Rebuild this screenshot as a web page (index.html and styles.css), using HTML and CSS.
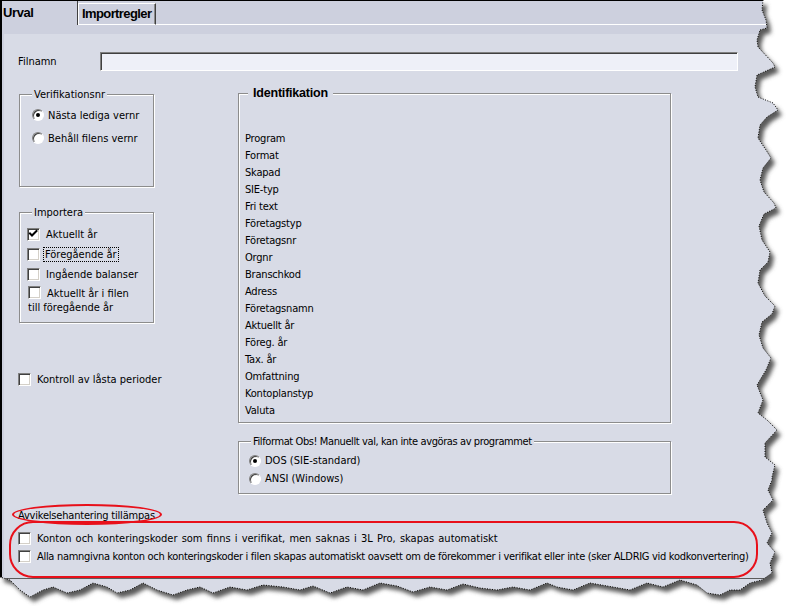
FILE: index.html
```html
<!DOCTYPE html>
<html lang="sv">
<head>
<meta charset="utf-8">
<title>Urval</title>
<link rel="stylesheet" href="styles.css">
</head>
<body>
<div class="sheet">
  <div class="window">
    <div class="tabs">
      <div class="tab tab-active">Urval</div>
      <div class="tab tab-idle">Importregler</div>
      <div class="tab-fill"></div>
    </div>
    <div class="page">
      <div class="panel">
        <div class="file-row">
          <span class="file-label">Filnamn</span>
          <div class="text-input"></div>
        </div>

        <div class="columns">
          <div class="left-col">
            <fieldset class="group group-ver">
              <legend>Verifikationsnr</legend>
              <div class="opt opt-radio"><span class="radio checked"></span><span>Nästa lediga vernr</span></div>
              <div class="opt opt-radio"><span class="radio"></span><span>Behåll filens vernr</span></div>
            </fieldset>

            <fieldset class="group group-imp">
              <legend>Importera</legend>
              <div class="opt"><span class="check checked"><svg viewBox="0 0 13 13" width="13" height="13"><path d="M3 5.5 L5 7.5 L9.5 3" fill="none" stroke="#000" stroke-width="2" stroke-linecap="square"/></svg></span><span>Aktuellt år</span></div>
              <div class="opt"><span class="check"></span><span class="focus">Föregående år</span></div>
              <div class="opt"><span class="check"></span><span>Ingående balanser</span></div>
              <div class="opt-wrap"><span class="check"></span>Aktuellt år i filen<br>till föregående år</div>
            </fieldset>

            <div class="opt opt-kontroll"><span class="check"></span><span>Kontroll av låsta perioder</span></div>
          </div>

          <div class="right-col">
            <fieldset class="group group-id">
              <legend class="legend-bold">Identifikation</legend>
              <ul class="id-list">
                <li>Program</li>
                <li>Format</li>
                <li>Skapad</li>
                <li>SIE-typ</li>
                <li>Fri text</li>
                <li>Företagstyp</li>
                <li>Företagsnr</li>
                <li>Orgnr</li>
                <li>Branschkod</li>
                <li>Adress</li>
                <li>Företagsnamn</li>
                <li>Aktuellt år</li>
                <li>Föreg. år</li>
                <li>Tax. år</li>
                <li>Omfattning</li>
                <li>Kontoplanstyp</li>
                <li>Valuta</li>
              </ul>
            </fieldset>

            <fieldset class="group group-fmt">
              <legend>Filformat Obs! Manuellt val, kan inte avgöras av programmet</legend>
              <div class="opt opt-fmt"><span class="radio checked"></span><span>DOS (SIE-standard)</span></div>
              <div class="opt opt-fmt"><span class="radio"></span><span>ANSI (Windows)</span></div>
            </fieldset>
          </div>
        </div>

        <div class="dev-title">Avvikelsehantering tillämpas</div>
        <div class="opt opt-dev opt-dev-1"><span class="check"></span><span>Konton och konteringskoder som finns i verifikat, men saknas i 3L Pro, skapas automatiskt</span></div>
        <div class="opt opt-dev opt-dev-2"><span class="check"></span><span>Alla namngivna konton och konteringskoder i filen skapas automatiskt oavsett om de förekommer i verifikat eller inte (sker ALDRIG vid kodkonvertering)</span></div>
      </div>
    </div>
  </div>

  <div class="mark mark-ellipse"></div>
  <div class="mark mark-box"></div>

  <svg class="torn" width="789" height="606" viewBox="0 0 789 606" xmlns="http://www.w3.org/2000/svg">
    <defs>
      <path id="edge" d="M763 0 L762 10 L766 20 L767 28 L760 30 L757 40 L758 47 L773 63 L775 67 L757 75 L755 87 L758 97 L773 103 L778 110 L767 117 L760 125 L758 138 L766 150 L771 158 L763 168 L760 180 L764 192 L774 203 L776 208 L764 214 L759 226 L762 240 L770 252 L768 262 L760 270 L758 283 L765 296 L775 306 L772 314 L762 322 L759 335 L763 348 L771 358 L766 370 L757 385 L763 400 L758 413 L767 420 L777 430 L765 443 L765 457 L775 465 L772 477 L772 480 L768 490 L773 500 L763 510 L767 523 L772 533 L767 543 L775 552 L770 563 L772 573 L762 580 L750 583 L740 590 L730 590 L720 595 L707 593 L697 585 L680 580 L663 587 L647 583 L630 590 L613 587 L590 583 L573 590 L557 587 L547 583 L530 590 L513 587 L497 590 L480 588 L463 584 L447 590 L430 587 L413 592 L397 586 L380 583 L363 590 L347 587 L330 593 L313 586 L300 590 L283 587 L263 585 L247 590 L230 587 L213 593 L200 587 L187 590 L173 595 L157 590 L143 583 L130 590 L117 593 L107 587 L93 583 L80 590 L67 593 L53 587 L43 590 L30 597 L20 590 L10 580 L0 577"/>
      <clipPath id="outside">
        <path clip-rule="evenodd" d="M0 0 H789 V606 H0 Z M0 0 L763 0 L762 10 L766 20 L767 28 L760 30 L757 40 L758 47 L773 63 L775 67 L757 75 L755 87 L758 97 L773 103 L778 110 L767 117 L760 125 L758 138 L766 150 L771 158 L763 168 L760 180 L764 192 L774 203 L776 208 L764 214 L759 226 L762 240 L770 252 L768 262 L760 270 L758 283 L765 296 L775 306 L772 314 L762 322 L759 335 L763 348 L771 358 L766 370 L757 385 L763 400 L758 413 L767 420 L777 430 L765 443 L765 457 L775 465 L772 477 L772 480 L768 490 L773 500 L763 510 L767 523 L772 533 L767 543 L775 552 L770 563 L772 573 L762 580 L750 583 L740 590 L730 590 L720 595 L707 593 L697 585 L680 580 L663 587 L647 583 L630 590 L613 587 L590 583 L573 590 L557 587 L547 583 L530 590 L513 587 L497 590 L480 588 L463 584 L447 590 L430 587 L413 592 L397 586 L380 583 L363 590 L347 587 L330 593 L313 586 L300 590 L283 587 L263 585 L247 590 L230 587 L213 593 L200 587 L187 590 L173 595 L157 590 L143 583 L130 590 L117 593 L107 587 L93 583 L80 590 L67 593 L53 587 L43 590 L30 597 L20 590 L10 580 L0 577 Z"/>
      </clipPath>
      <filter id="blur" x="-10%" y="-10%" width="120%" height="120%">
        <feGaussianBlur stdDeviation="2.2"/>
      </filter>
    </defs>
    <g clip-path="url(#outside)">
      <rect width="789" height="606" fill="#fff"/>
      <path d="M0 0 L763 0 L762 10 L766 20 L767 28 L760 30 L757 40 L758 47 L773 63 L775 67 L757 75 L755 87 L758 97 L773 103 L778 110 L767 117 L760 125 L758 138 L766 150 L771 158 L763 168 L760 180 L764 192 L774 203 L776 208 L764 214 L759 226 L762 240 L770 252 L768 262 L760 270 L758 283 L765 296 L775 306 L772 314 L762 322 L759 335 L763 348 L771 358 L766 370 L757 385 L763 400 L758 413 L767 420 L777 430 L765 443 L765 457 L775 465 L772 477 L772 480 L768 490 L773 500 L763 510 L767 523 L772 533 L767 543 L775 552 L770 563 L772 573 L762 580 L750 583 L740 590 L730 590 L720 595 L707 593 L697 585 L680 580 L663 587 L647 583 L630 590 L613 587 L590 583 L573 590 L557 587 L547 583 L530 590 L513 587 L497 590 L480 588 L463 584 L447 590 L430 587 L413 592 L397 586 L380 583 L363 590 L347 587 L330 593 L313 586 L300 590 L283 587 L263 585 L247 590 L230 587 L213 593 L200 587 L187 590 L173 595 L157 590 L143 583 L130 590 L117 593 L107 587 L93 583 L80 590 L67 593 L53 587 L43 590 L30 597 L20 590 L10 580 L0 577 Z" transform="translate(4 5)" fill="#5a5a5a" filter="url(#blur)"/>
    </g>
    <use href="#edge" fill="none" stroke="#000" stroke-width="1" stroke-dasharray="1 1.5"/>
  </svg>
</div>
</body>
</html>
```

FILE: styles.css
```css
* { box-sizing: border-box; }

html, body {
  margin: 0;
  padding: 0;
  background: #fff;
}

body {
  font-family: "DejaVu Sans Condensed", "DejaVu Sans", sans-serif;
  font-stretch: condensed;
  font-size: 11px;
  color: #000;
}

.sheet {
  position: relative;
  width: 789px;
  height: 606px;
  overflow: hidden;
  background: #d8dbe6;
}

.window {
  width: 789px;
  height: 579px;
  border-top: 1px solid #000;
  border-left: 2px solid #000;
  border-bottom: 1px solid #5c5c5c;
  background: #cdd0de;
  display: flex;
  flex-direction: column;
}

/* tabs */
.tabs {
  display: flex;
  align-items: flex-end;
  height: 24px;
}

.tab {
  font-family: "Liberation Sans", sans-serif;
  font-stretch: normal;
  font-weight: bold;
  font-size: 13px;
  letter-spacing: -0.4px;
  line-height: 20px;
}

.tab-active {
  width: 76px;
  height: 24px;
  padding: 2px 0 0 1px;
  border-right: 1px solid #404040;
}

.tab-idle {
  width: 78px;
  height: 22px;
  padding-left: 3px;
  border-top: 1px solid #fff;
  border-left: 1px solid #fff;
  border-right: 1px solid #404040;
  border-bottom: 1px solid #fff;
  box-shadow: inset -1px 0 0 #8a8a8a;
  line-height: 19px;
  letter-spacing: -0.6px;
}

.tab-fill {
  flex: 1;
  height: 1px;
  background: #fff;
}

.page {
  flex: 1;
  padding: 9px 0 0 2px;
  display: flex;
}

.panel {
  flex: 1;
  background: #d8dbe6;
  padding: 18px 0 0 14px;
}

/* file row */
.file-row {
  display: flex;
  align-items: center;
  height: 19px;
}

.file-label {
  width: 82px;
}

.text-input {
  width: 638px;
  height: 19px;
  background: #eef0f8;
  border-top: 1px solid #808080;
  border-left: 1px solid #808080;
  border-right: 1px solid #fff;
  border-bottom: 1px solid #fff;
  box-shadow: inset 1px 1px 0 #404040;
}

/* columns */
.columns {
  display: grid;
  grid-template-columns: 135px 433px;
  column-gap: 84px;
  align-items: start;
  margin-top: 17px;
  margin-left: 1px;
}

.group {
  margin: 0;
  border: 1px solid #8c8c8c;
  box-shadow: 1px 1px 0 #fff, inset 1px 1px 0 #fff;
  min-width: 0;
}

.group legend {
  padding: 0 2px;
  margin-left: 0;
  line-height: 13px;
  background: #d8dbe6;
}

.opt {
  display: flex;
  align-items: center;
  gap: 5px;
  height: 16px;
  white-space: nowrap;
}

.radio {
  width: 12px;
  height: 12px;
  flex: none;
  border-radius: 50%;
  background: #fff;
  border: 1px solid;
  border-color: #808080 #fff #fff #808080;
  box-shadow: inset 1px 1px 0 #404040;
  position: relative;
}

.radio.checked::after {
  content: "";
  position: absolute;
  left: 3px;
  top: 3px;
  width: 4px;
  height: 4px;
  border-radius: 50%;
  background: #000;
}

.check {
  width: 13px;
  height: 13px;
  flex: none;
  display: inline-block;
  vertical-align: -2px;
  background: #fff;
  border: 1px solid;
  border-color: #808080 #fff #fff #808080;
  box-shadow: inset 1px 1px 0 #404040, inset -1px -1px 0 #d4d0c8;
  position: relative;
}

.check svg {
  position: absolute;
  left: -1px;
  top: -1px;
}

/* Verifikationsnr */
.group-ver {
  height: 99px;
  padding: 6px 0 0 12px;
}

.group-ver .opt-radio {
  gap: 4px;
}

.group-ver .opt-radio + .opt-radio {
  margin-top: 7px;
}

/* Importera */
.group-imp {
  height: 117px;
  margin-top: 19px;
  padding: 7px 0 0 7px;
}

.group-imp legend {
  margin-left: 5px;
}

.group-imp .opt {
  gap: 6px;
  margin-bottom: 4px;
}

.focus {
  outline: 1px dotted #000;
  outline-offset: 0;
  padding: 0 1px;
  margin-left: -2px;
}

.opt-wrap {
  line-height: 14px;
  margin-top: 1px;
  margin-left: 1px;
}

.opt-wrap .check {
  margin-right: 6px;
}

.opt-kontroll {
  margin-top: 48px;
  margin-left: -1px;
  gap: 6px;
}

/* right column */
.right-col {
  margin-top: -1px;
}

.group-id {
  height: 336px;
  padding: 30px 0 0 6px;
}

.group legend.legend-bold {
  font-family: "Liberation Sans", sans-serif;
  font-stretch: normal;
  font-weight: bold;
  font-size: 12.5px;
  letter-spacing: -0.2px;
  padding: 0 5px;
  margin-left: 3px;
}

.id-list {
  list-style: none;
  margin: 0;
  padding: 0;
  letter-spacing: -0.2px;
}

.id-list li {
  height: 17px;
  line-height: 17px;
}

.group-fmt {
  height: 59px;
  margin-top: 12px;
  padding: 4px 0 0 10px;
}

.group-fmt legend {
  margin-left: 2px;
  letter-spacing: -0.4px;
}

.opt-fmt {
  gap: 4px;
  height: 17px;
}

.opt-fmt + .opt-fmt {
  margin-top: 1px;
}

/* deviation handling */
.dev-title {
  margin-top: 15px;
  line-height: 14px;
  letter-spacing: -0.2px;
}

.opt-dev {
  height: 18px;
  gap: 6px;
}

.opt-dev-1 {
  word-spacing: 1px;
}

.opt-dev-2 {
  letter-spacing: -0.3px;
}

.dev-title + .opt-dev {
  margin-top: 6px;
}

/* red annotation marks */
.mark {
  position: absolute;
  border: 2px solid #e8101a;
  pointer-events: none;
}

.mark-ellipse {
  left: 12px;
  top: 504px;
  width: 150px;
  height: 21px;
  border-radius: 50%;
}

.mark-box {
  left: 9px;
  top: 521px;
  width: 749px;
  height: 57px;
  border-radius: 24px;
}

.torn {
  position: absolute;
  left: 0;
  top: 0;
  pointer-events: none;
}
```
